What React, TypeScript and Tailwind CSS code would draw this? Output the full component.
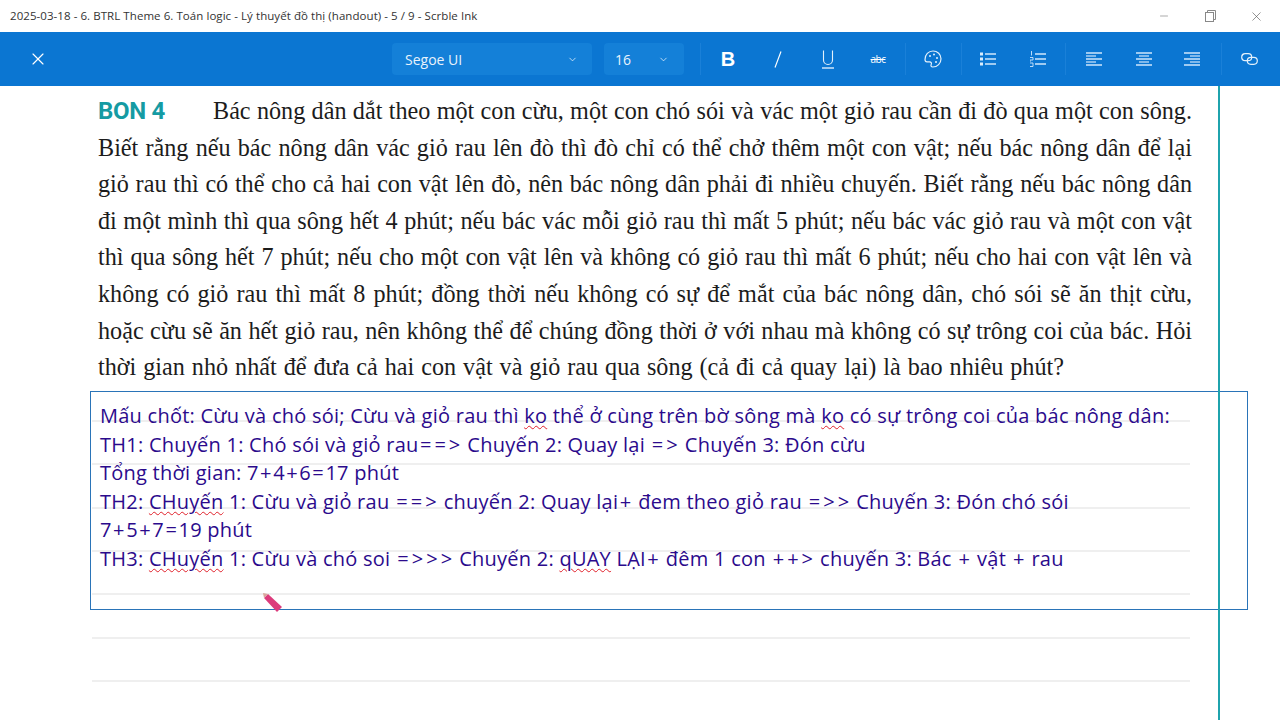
import type { ReactNode } from 'react';
import { ChevronDown, Minus, X } from 'lucide-react';

const problem = [
  'Biết rằng nếu bác nông dân vác giỏ rau lên đò thì đò chỉ có thể chở thêm một con vật; nếu bác nông dân để lại',
  'giỏ rau thì có thể cho cả hai con vật lên đò, nên bác nông dân phải đi nhiều chuyến. Biết rằng nếu bác nông dân',
  'đi một mình thì qua sông hết 4 phút; nếu bác vác mỗi giỏ rau thì mất 5 phút; nếu bác vác giỏ rau và một con vật',
  'thì qua sông hết 7 phút; nếu cho một con vật lên và không có giỏ rau thì mất 6 phút; nếu cho hai con vật lên và',
  'không có giỏ rau thì mất 8 phút; đồng thời nếu không có sự để mắt của bác nông dân, chó sói sẽ ăn thịt cừu,',
  'hoặc cừu sẽ ăn hết giỏ rau, nên không thể để chúng đồng thời ở với nhau mà không có sự trông coi của bác. Hỏi',
];

const ruled = [0, 1, 2, 3, 4, 5, 6];

function Squiggle({ children }: { children: string }) {
  return <span className="underline decoration-wavy decoration-[#e0202a] decoration-1 underline-offset-2">{children}</span>;
}

// math signs sit wider in the original font, with air on both sides
function Op({ children }: { children: string }) {
  return (
    <>
      {children.split('').map((c, i) => (
        <span key={i} className="mx-[1.4px]">{c}</span>
      ))}
    </>
  );
}

function Sep({ className = '' }: { className?: string }) {
  return <div className={`h-8 w-px bg-[#1a80d8] ${className}`} />;
}

function AlignIcon({ kind }: { kind: 'left' | 'center' | 'right' }) {
  const short = kind === 'left' ? 'M0 4h10M0 10h10' : kind === 'center' ? 'M3 4h10M3 10h10' : 'M6 4h10M6 10h10';
  return (
    <svg width="16" height="14" viewBox="0 0 16 14" fill="none" stroke="#cfe6fb" strokeWidth="1">
      <path d="M0 1h16M0 7h16M0 13h16" strokeWidth="1.4" />
      <path d={short} stroke="#a9d0f3" strokeWidth="1.4" />
    </svg>
  );
}

function ToolIcon({ w, children }: { w: string; children: ReactNode }) {
  return <div className={`flex h-8 items-center justify-center ${w}`}>{children}</div>;
}

export default function App() {
  return (
    <div className="relative h-[720px] w-[1280px] overflow-hidden bg-white font-['Open_Sans','Noto_Sans',sans-serif]">
      {/* Title bar */}
      <div className="flex h-8 items-center justify-between bg-white pl-[10px] pr-[1px]">
        <span className="text-[11.5px] tracking-[0.06px] text-[#333]">
          2025-03-18 - 6. BTRL Theme 6. Toán logic - Lý thuyết đồ thị (handout) - 5 / 9 - Scrble Ink
        </span>
        <div className="flex items-center text-[#555]">
          <div className="flex w-[46px] justify-center">
            <Minus className="h-3 w-3" strokeWidth={1} />
          </div>
          <div className="flex w-[46px] justify-center">
            <svg width="11" height="12" viewBox="0 0 11 12" fill="none" stroke="#888">
              <rect x="0.5" y="2.5" width="8" height="9" />
              <path d="M2.5 2.5V0.5H10.5V9.5H8.5" />
            </svg>
          </div>
          <div className="flex w-[46px] justify-center">
            <X className="h-[15px] w-[15px]" strokeWidth={1} />
          </div>
        </div>
      </div>

      {/* Toolbar */}
      <div className="flex h-[54px] items-center bg-[#0b76d2] pl-[28px] text-white">
        <X className="h-5 w-5" strokeWidth={1.4} />
        <div className="ml-[344px] flex h-8 w-[200px] items-center justify-between rounded-sm bg-[#1480d8] pl-[13px] pr-[14px]">
          <span className="text-[14px] text-[#e8f3fc]">Segoe UI</span>
          <ChevronDown className="h-[11px] w-[11px]" strokeWidth={1.5} />
        </div>
        <div className="ml-[12px] flex h-8 w-[80px] items-center justify-between rounded-sm bg-[#1480d8] pl-[11px] pr-[15px]">
          <span className="text-[14px] text-[#e8f3fc]">16</span>
          <ChevronDown className="h-[11px] w-[11px]" strokeWidth={1.5} />
        </div>
        <Sep className="ml-[16px]" />
        <ToolIcon w="w-[54px]">
          <span className="font-['Liberation_Sans',sans-serif] text-[20px] font-bold">B</span>
        </ToolIcon>
        <ToolIcon w="w-[46px]">
          <svg width="8" height="17" viewBox="0 0 8 17" stroke="#fff" strokeWidth="1.2"><path d="M7 0.5L1 16.5" /></svg>
        </ToolIcon>
        <ToolIcon w="w-[54px]">
          <svg width="12" height="19" viewBox="0 0 12 19" fill="none" stroke="#e3f0fb" strokeWidth="1.1">
            <path d="M1.5 0.5V10a4.5 4.5 0 0 0 9 0V0.5" />
            <path d="M0 18h12" strokeWidth="1.5" stroke="#cfe6fa" />
          </svg>
        </ToolIcon>
        <ToolIcon w="w-[46px]">
          <span className="text-[10px] tracking-[-0.5px] line-through decoration-1">abc</span>
        </ToolIcon>
        <Sep className="ml-[4px]" />
        <ToolIcon w="w-[54px]">
          <svg className="-scale-x-100" width="18" height="18" viewBox="0 0 18 18" fill="none" stroke="#e3f0fb" strokeWidth="1.2">
            <path d="M9 1C4.5 1 1 4.5 1 8.8 1 13.4 4.6 17 9.2 17c1.7 0 2.2-1.3 1.6-2.5-.7-1.4.1-2.6 1.6-2.6H15c1.3 0 2-1 2-2.4C17 4.6 13.5 1 9 1Z" />
            <circle cx="5" cy="8" r="1" fill="#e3f0fb" stroke="none" />
            <circle cx="8" cy="4.6" r="1" fill="#e3f0fb" stroke="none" />
            <circle cx="12" cy="6" r="1" fill="#e3f0fb" stroke="none" />
            <circle cx="6" cy="12" r="1" fill="#e3f0fb" stroke="none" />
          </svg>
        </ToolIcon>
        <Sep className="ml-[1px]" />
        <ToolIcon w="w-[52px]">
          <svg width="16" height="14" viewBox="0 0 16 14" stroke="#cfe6fb" fill="#dcecfa">
            <path d="M5 2h11M5 7h11M5 12h11" strokeWidth="1.3" />
            <rect x="0" y="0.5" width="3" height="3" stroke="none" />
            <rect x="0" y="5.5" width="3" height="3" stroke="none" />
            <rect x="0" y="10.5" width="3" height="3" stroke="none" />
          </svg>
        </ToolIcon>
        <ToolIcon w="w-[48px]">
          <svg width="16" height="16" viewBox="0 0 16 16" stroke="#cfe6fb" fill="none">
            <path d="M5 3h11M5 8h11M5 13h11" strokeWidth="1.3" />
            <path d="M1.5 0v4.5M0 6.5h3v2.5h-3v2M0 12h3v3.5h-3" strokeWidth="0.9" />
          </svg>
        </ToolIcon>
        <Sep className="ml-[3px]" />
        <ToolIcon w="w-[56px]"><AlignIcon kind="left" /></ToolIcon>
        <ToolIcon w="w-[44px]"><AlignIcon kind="center" /></ToolIcon>
        <ToolIcon w="w-[52px]"><AlignIcon kind="right" /></ToolIcon>
        <Sep className="ml-[3px]" />
        <ToolIcon w="w-[54px]">
          <svg width="17" height="12" viewBox="0 0 17 12" fill="none" stroke="#e3f0fb" strokeWidth="1.2">
            <rect x="0.7" y="0.7" width="10" height="7" rx="3.5" />
            <rect x="6.3" y="4.3" width="10" height="7" rx="3.5" />
          </svg>
        </ToolIcon>
      </div>

      {/* Page */}
      <div className="relative h-[634px]">
        <div className="pl-[98px] pr-[88px] pt-[7px] font-['Liberation_Serif',serif] text-[24.2px] leading-[36.6px] text-[#1c1c1c]">
          <div className="flex items-baseline">
            <span className="w-[115px] font-['Roboto',sans-serif] text-[24px] font-bold tracking-[-0.3px] text-[#159ba3]">BON 4</span>
            <span className="flex-1 [text-align-last:justify]">Bác nông dân dắt theo một con cừu, một con chó sói và vác một giỏ rau cần đi đò qua một con sông.</span>
          </div>
          {problem.map((line) => (
            <div key={line} className="[text-align-last:justify]">{line}</div>
          ))}
          <div className="w-[966px] [text-align-last:justify]">thời gian nhỏ nhất để đưa cả hai con vật và giỏ rau qua sông (cả đi cả quay lại) là bao nhiêu phút?</div>
        </div>

        {/* Ruled lines */}
        <div className="ml-[92px] mt-[34px] flex w-[1098px] flex-col gap-[41.4px]">
          {ruled.map((i) => (
            <div key={i} className="h-[2px] bg-[#efefef]" />
          ))}
        </div>

        {/* Text box */}
        <div className="absolute left-[90px] top-[305px] h-[219px] w-[1158px] border border-[#2a74b8] px-[9px] pt-[10px] text-[20px] leading-[28.6px] tracking-[0.25px] text-[#2b0a8c]">
          <div>Mấu chốt: Cừu và chó sói; Cừu và giỏ rau thì <Squiggle>ko</Squiggle> thể ở cùng trên bờ sông mà <Squiggle>ko</Squiggle> có sự trông coi của bác nông dân:</div>
          <div>TH1: Chuyến 1: Chó sói và giỏ rau<Op>==&gt;</Op> Chuyến 2: Quay lại <Op>=&gt;</Op> Chuyến 3: Đón cừu</div>
          <div>Tổng thời gian: 7<Op>+</Op>4<Op>+</Op>6<Op>=</Op>17 phút</div>
          <div>TH2: <Squiggle>CHuyến</Squiggle> 1: Cừu và giỏ rau <Op>==&gt;</Op> chuyến 2: Quay lại<Op>+</Op> đem theo giỏ rau <Op>=&gt;&gt;</Op> Chuyến 3: Đón chó sói</div>
          <div>7<Op>+</Op>5<Op>+</Op>7<Op>=</Op>19 phút</div>
          <div>TH3: <Squiggle>CHuyến</Squiggle> 1: Cừu và chó soi <Op>=&gt;&gt;&gt;</Op> Chuyến 2: <Squiggle>qUAY</Squiggle> LẠI<Op>+</Op> đêm 1 con <Op>++&gt;</Op> chuyến 3: Bác <Op>+</Op> vật <Op>+</Op> rau</div>
        </div>

        {/* Pencil cursor */}
        <svg className="absolute left-[262px] top-[506px]" width="22" height="22" viewBox="0 0 22 22">
          <path d="M6 2L20 15L15 20L2 6Z" fill="#dc3c7c" />
          <path d="M1 1L6 2L2 6Z" fill="#d9a79e" />
        </svg>

        {/* Margin line */}
        <div className="absolute bottom-0 left-[1218px] top-0 w-[2px] bg-[#1fa3ad]" />
      </div>
    </div>
  );
}
